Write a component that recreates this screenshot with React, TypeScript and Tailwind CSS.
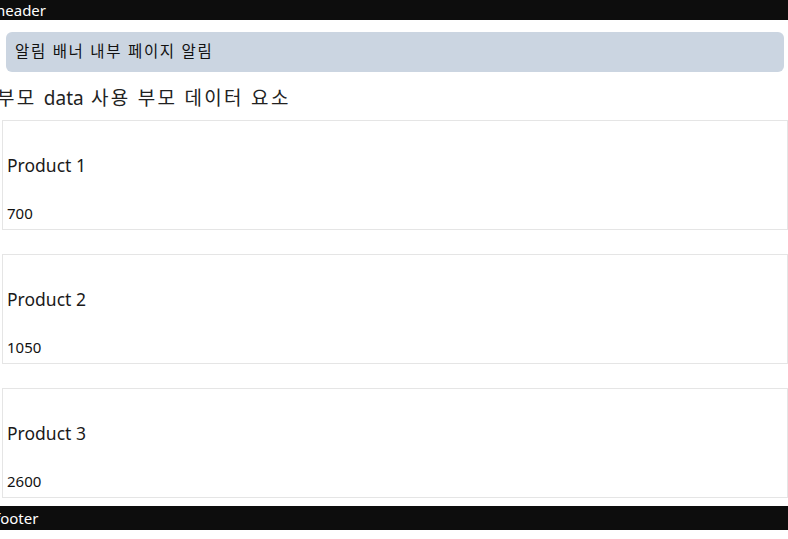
import React from "react";

const products = [
  { name: "Product 1", price: 700 },
  { name: "Product 2", price: 1050 },
  { name: "Product 3", price: 2600 },
];

const ProductCard = ({ name, price }: { name: string; price: number }) => {
  return (
    <div className="border border-[#e5e5e5] bg-white pl-[4px] pt-[32px] pb-[6px]">
      <h3 className="text-[17.5px] leading-[24px] text-[#1a1a1a]">{name}</h3>
      <p className="mt-[26px] text-[15px] leading-[20px] text-[#111]">{price}</p>
    </div>
  );
};

export default function App() {
  return (
    <div
      className="w-[788px] overflow-hidden bg-white"
      style={{ fontFamily: '"Noto Sans", "Noto Sans CJK KR", sans-serif' }}
    >
      <header className="h-5 bg-[#0d0d0d] text-white text-[15px] leading-[20px] -ml-[4px]">
        header
      </header>

      <div className="mt-3 ml-[6px] mr-[4px] h-10 rounded-md bg-[#cbd5e1] pl-[9px] flex items-center text-[15.5px] tracking-[1.7px] text-[#111]">
        알림 배너 내부 페이지 알림
      </div>

      <h2 className="mt-[14px] -ml-[3px] text-[19px] leading-[24px] text-[#222]">
        <span className="tracking-[2.3px]">부모 </span>
        data
        <span className="tracking-[2.3px]"> 사용 부모 데이터 요소</span>
      </h2>

      <div className="mt-[10px] ml-[2px] flex flex-col gap-6">
        {products.map((p) => (
          <ProductCard key={p.name} name={p.name} price={p.price} />
        ))}
      </div>

      <footer className="mt-2 h-6 bg-[#0d0d0d] text-white text-[15px] leading-[24px] -ml-[5px]">
        footer
      </footer>
    </div>
  );
}
